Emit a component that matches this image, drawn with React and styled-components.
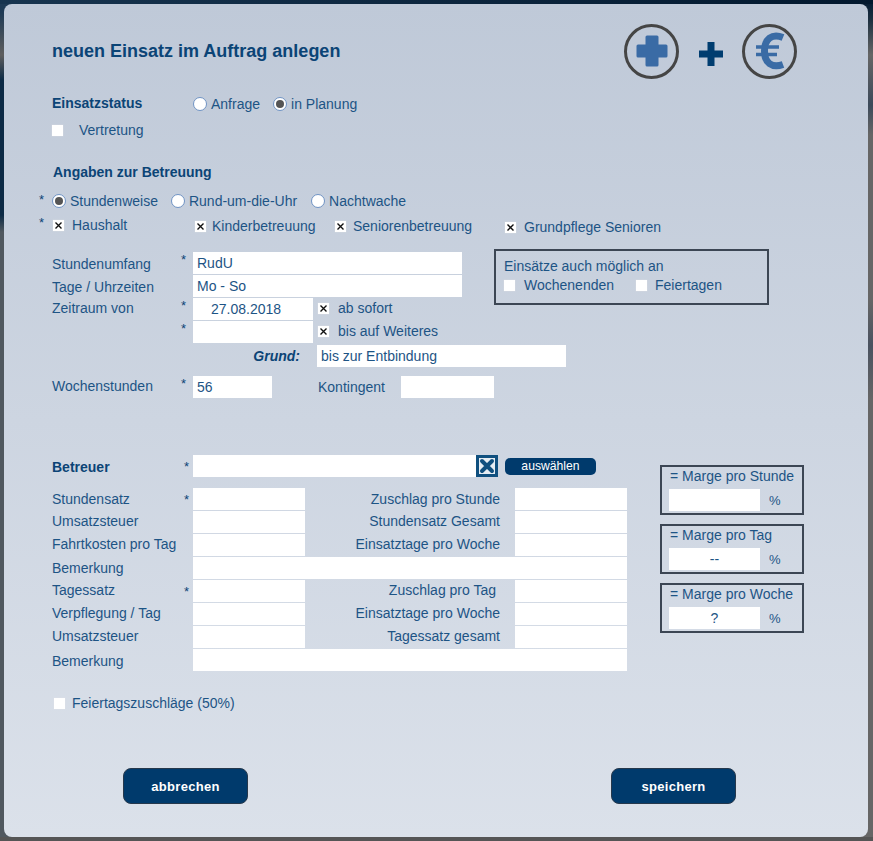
import React from "react";
import styled, { createGlobalStyle } from "styled-components";

const GlobalStyle = createGlobalStyle`
	html, body {
		margin: 0;
		padding: 0;
		height: 100%;
	}
	body {
		font-family: "Liberation Sans", Arial, sans-serif;
		font-size: 14px;
		color: #1d5485;
		background-color: #555;
	}
`;

const Page = styled.div`
	width: 873px;
	height: 841px;
	box-sizing: border-box;
	padding: 4px 5px 4px 4px;
	overflow: hidden;
	background-image:
		linear-gradient(to right, #17344f, #02182e),
		linear-gradient(to right, #555, #555),
		linear-gradient(to bottom, #1e3a55 0, #1e3a55 12px, #5e5e5e 55px, #0c2a45 80px, #0c2a45 215px, #50585f 232px, #50585f 100%),
		linear-gradient(to bottom, #021a33 0, #1d3040 20px, #666 55px, #3c4a5a 105px, #666 135px, #666 300px, #4a5260 345px, #666 400px, #666 100%);
	background-size: 100% 4px, 100% 4px, 50% 100%, 50% 100%;
	background-position: left top, left bottom, left top, right top;
	background-repeat: no-repeat;
`;

const Panel = styled.div`
	box-sizing: border-box;
	width: 864px;
	height: 833px;
	padding-left: 48px;
	border-radius: 8px;
	background: linear-gradient(to bottom, #bfc9d8, #dbe1ea);
`;

const Header = styled.div`
	display: flex;
	justify-content: space-between;
	align-items: center;
	height: 56px;
	padding: 19px 71px 0 0;
`;

const Title = styled.h1`
	margin: 0;
	font-size: 18px;
	font-weight: bold;
	color: #0b4476;
`;

const Icons = styled.div`
	display: flex;
	align-items: center;
	gap: 19px;
`;

const Circle = styled.div`
	display: flex;
	justify-content: center;
	align-items: center;
	box-sizing: border-box;
	width: 55px;
	height: 55px;
	margin-right: ${(p) => p.$right || 0}px;
	border: 3.5px solid #454545;
	border-radius: 50%;
`;

const PlusSign = styled.svg`
	margin-top: 6px;
`;

const Line = styled.div`
	display: flex;
	align-items: center;
	height: 20px;
	margin-top: ${(p) => p.$top || 0}px;
	padding-left: ${(p) => p.$left || 0}px;
`;

const StatusLabel = styled.div`
	width: 141px;
	margin-top: ${(p) => (p.$shift || 0) * 2}px;
	font-size: 14px;
	font-weight: bold;
	color: #0b4476;
`;

const Heading = styled.h2`
	margin: ${(p) => p.$top}px 0 0 1px;
	height: 20px;
	line-height: 20px;
	font-size: 14px;
	font-weight: bold;
	color: #0b4476;
`;

const Option = styled.label`
	display: flex;
	align-items: center;
	gap: ${(p) => p.$gap || 4}px;
	margin-left: ${(p) => p.$left || 0}px;
	margin-right: ${(p) => p.$right || 0}px;
	margin-top: ${(p) => (p.$shift || 0) * 2}px;
	width: ${(p) => (p.$width ? `${p.$width}px` : "auto")};
	white-space: nowrap;
`;

const RadioDot = styled.span`
	display: flex;
	justify-content: center;
	align-items: center;
	box-sizing: border-box;
	width: 14px;
	height: 14px;
	border: 1px solid #6f93c4;
	border-radius: 50%;
	background: #fff;

	&::after {
		content: "";
		display: ${(p) => (p.$on ? "block" : "none")};
		width: 8px;
		height: 8px;
		border-radius: 50%;
		background: #555;
	}
`;

const CheckBox = styled.span`
	display: flex;
	flex: none;
	justify-content: center;
	align-items: center;
	width: 11px;
	height: 11px;
	background: #fff;
	box-shadow: 0 0 1px #e4e4e4;
`;

const Star = styled.span`
	flex: none;
	align-self: flex-start;
	width: ${(p) => p.$width || 13}px;
	padding-top: ${(p) => p.$down || 0}px;
	font-size: 13px;
	line-height: 14px;
	color: #0b4476;
`;

const StarRows = styled.div`
	margin-left: -13px;
`;

const Cross = () => (
	<svg width="9" height="9" viewBox="0 0 9 9">
		<path d="M1.5 1.5 L7.5 7.5 M7.5 1.5 L1.5 7.5" stroke="#111" strokeWidth="1.4" />
	</svg>
);

const Check = ({ on }) => <CheckBox>{on && <Cross />}</CheckBox>;

const Upper = styled.div`
	display: flex;
	align-items: flex-start;
	margin-top: 14px;
`;

const UpperLeft = styled.div`
	display: flex;
	flex-direction: column;
	gap: 1px;
	width: 442px;
	padding-top: 3px;
`;

const FormRow = styled.div`
	display: grid;
	grid-template-columns: 129px 12px auto 1fr;
	align-items: center;
	height: 22px;
`;

const RowLabel = styled.span`
	margin-top: ${(p) => (p.$shift || 0) * 2}px;
	white-space: nowrap;
`;

const Field = styled.input`
	box-sizing: border-box;
	width: ${(p) => p.$width}px;
	height: 22px;
	margin-left: ${(p) => p.$left || 0}px;
	padding: 0 0 0 ${(p) => p.$pad ?? 4}px;
	border: 0;
	outline: 0;
	background: #fff;
	font-family: "Liberation Sans", Arial, sans-serif;
	font-size: 14px;
	color: #1d5485;
	text-align: ${(p) => p.$align || "left"};
`;

const SideBox = styled.div`
	box-sizing: border-box;
	width: 275px;
	height: 56px;
	padding: 7px 0 0 8px;
	border: 2px solid #3c4654;
`;

const SideRow = styled.div`
	display: flex;
	margin-top: 3px;
`;

const GrundRow = styled.div`
	display: flex;
	align-items: center;
	margin-top: 2px;
`;

const GrundLabel = styled.div`
	width: 248px;
	text-align: right;
	font-weight: bold;
	font-style: italic;
	color: #0b4476;
`;

const WochenRow = styled.div`
	display: grid;
	grid-template-columns: 129px 12px 79px 46px 83px auto;
	align-items: center;
	height: 22px;
	margin-top: 9px;
`;

const Lower = styled.div`
	display: flex;
	margin-top: 57px;
`;

const LowerLeft = styled.div`
	width: 575px;
	margin-right: 33px;
`;

const PickRow = styled.div`
	display: grid;
	grid-template-columns: 132px 9px 283px 22px 7px 91px;
	align-items: center;
	height: 22px;
`;

const ClearButton = styled.div`
	display: flex;
	justify-content: center;
	align-items: center;
	box-sizing: border-box;
	width: 22px;
	height: 22px;
	border: 3px solid #10507f;
	background: #e6edf3;
`;

const PickButton = styled.button`
	height: 17px;
	padding: 0;
	border: 0;
	border-radius: 5px;
	background: #003a6c;
	font-family: "Liberation Sans", Arial, sans-serif;
	font-size: 12.2px;
	color: #fff;
`;

const RatesGrid = styled.div`
	display: grid;
	grid-template-columns: 132px 9px 112px 210px 112px;
	grid-auto-rows: 22px;
	row-gap: 1px;
	align-items: center;
	margin-top: 11px;
`;

const Cell = styled.div`
	grid-column: 3 / span 3;
	height: 22px;
	background: #fff;
`;

const ValueCell = styled.div`
	height: 22px;
	background: #fff;
`;

const RightLabel = styled.div`
	margin-top: ${(p) => (p.$shift || 0) * 2}px;
	padding-right: ${(p) => p.$right || 15}px;
	text-align: right;
	white-space: nowrap;
`;

const Margins = styled.div`
	display: flex;
	flex-direction: column;
	gap: 9px;
	margin-top: 10px;
`;

const MarginBox = styled.div`
	box-sizing: border-box;
	width: 144px;
	height: 50px;
	padding: 2px 0 0 7px;
	border: 2px solid #3c4654;
`;

const MarginTitle = styled.div`
	height: 20px;
	padding-left: 1px;
	line-height: 15px;
	white-space: nowrap;
`;

const MarginRow = styled.div`
	display: flex;
	align-items: center;
	gap: 9px;
	font-size: 13px;
`;

const Footer = styled.div`
	display: flex;
	gap: 363px;
	margin-top: 55px;
	padding-left: 71px;
`;

const ActionButton = styled.button`
	width: 125px;
	height: 36px;
	padding: 0;
	border: 1px solid #26384c;
	border-radius: 8px;
	background: #003a6c;
	font-family: "Liberation Sans", Arial, sans-serif;
	font-size: 13px;
	font-weight: bold;
	letter-spacing: 0.3px;
	color: #fff;
`;

const Radio = ({ label, on, gap, right }) => (
	<Option $gap={gap} $right={right}>
		<RadioDot $on={on} />
		{label}
	</Option>
);

const rates = [
	{ label: "Stundensatz", required: true, right: "Zuschlag pro Stunde" },
	{ label: "Umsatzsteuer", shift: -1, right: "Stundensatz Gesamt" },
	{ label: "Fahrtkosten pro Tag", shift: -1, right: "Einsatztage pro Woche" },
	{ label: "Bemerkung" },
	{ label: "Tagessatz", shift: -1, required: true, right: "Zuschlag pro Tag", pad: 19 },
	{ label: "Verpflegung / Tag", shift: -1, right: "Einsatztage pro Woche" },
	{ label: "Umsatzsteuer", shift: -1, right: "Tagessatz gesamt" },
	{ label: "Bemerkung", shift: 1 },
];

const margins = [
	["= Marge pro Stunde", ""],
	["= Marge pro Tag", "--"],
	["= Marge pro Woche", "?"],
];

const App = () => {
	return (
		<Page>
			<GlobalStyle />
			<Panel>
				<Header>
					<Title>neuen Einsatz im Auftrag anlegen</Title>
					<Icons>
						<Circle $right={1}>
							<svg width="32" height="32" viewBox="0 0 32 32">
								<path
									d="M11 0.5 H21 A1.5 1.5 0 0 1 22.5 2 V9.5 H30 A1.5 1.5 0 0 1 31.5 11 V21 A1.5 1.5 0 0 1 30 22.5 H22.5 V30 A1.5 1.5 0 0 1 21 31.5 H11 A1.5 1.5 0 0 1 9.5 30 V22.5 H2 A1.5 1.5 0 0 1 0.5 21 V11 A1.5 1.5 0 0 1 2 9.5 H9.5 V2 A1.5 1.5 0 0 1 11 0.5 Z"
									fill="#3a6ba5"
								/>
							</svg>
						</Circle>
						<PlusSign width="24" height="24" viewBox="0 0 24 24">
							<path d="M8.5 0 H15.5 V8.5 H24 V15.5 H15.5 V24 H8.5 V15.5 H0 V8.5 H8.5 Z" fill="#003d70" />
						</PlusSign>
						<Circle>
							<svg width="30" height="38" viewBox="0 0 30 38">
								<path d="M28 5.5 C17 1 9.5 7 9.5 19 C9.5 31 17 36.5 28 32.5" fill="none" stroke="#3a6ba5" strokeWidth="7" />
								<path d="M1 15 H24 M1 22.5 H22" fill="none" stroke="#3a6ba5" strokeWidth="3.6" />
							</svg>
						</Circle>
					</Icons>
				</Header>

				<Line $top={15}>
					<StatusLabel $shift={-1}>Einsatzstatus</StatusLabel>
					<Radio label="Anfrage" right={13} />
					<Radio label="in Planung" on />
				</Line>
				<Line $top={6}>
					<Option $gap={16}>
						<Check />
						Vertretung
					</Option>
				</Line>

				<Heading $top={22}>Angaben zur Betreuung</Heading>

				<StarRows>
					<Line $top={9}>
						<Star $down={2}>*</Star>
						<Radio label="Stundenweise" on right={13} />
						<Radio label="Rund-um-die-Uhr" right={14} />
						<Radio label="Nachtwache" />
					</Line>
					<Line $top={4}>
						<Star $down={1}>*</Star>
						<Option $gap={8} $width={142} $left={1}>
							<Check on />
							Haushalt
						</Option>
						<Option $gap={6} $width={140} $shift={1}>
							<Check on />
							Kinderbetreuung
						</Option>
						<Option $gap={7} $width={170} $shift={1}>
							<Check on />
							Seniorenbetreuung
						</Option>
						<Option $gap={8} $shift={2}>
							<Check on />
							Grundpflege Senioren
						</Option>
					</Line>
				</StarRows>

				<Upper>
					<UpperLeft>
						<FormRow>
							<RowLabel $shift={1}>Stundenumfang</RowLabel>
							<Star $down={1}>*</Star>
							<Field $width={269} defaultValue="RudU" />
						</FormRow>
						<FormRow>
							<RowLabel $shift={1}>Tage / Uhrzeiten</RowLabel>
							<span />
							<Field $width={269} defaultValue="Mo - So" />
						</FormRow>
						<FormRow>
							<RowLabel $shift={-1}>Zeitraum von</RowLabel>
							<Star $down={1}>*</Star>
							<Field $width={120} $pad={18} defaultValue="27.08.2018" />
							<Option $gap={9} $left={5} $shift={-1}>
								<Check on />
								ab sofort
							</Option>
						</FormRow>
						<FormRow>
							<span />
							<Star $down={1}>*</Star>
							<Field $width={120} />
							<Option $gap={9} $left={5} $shift={-1}>
								<Check on />
								bis auf Weiteres
							</Option>
						</FormRow>
					</UpperLeft>
					<SideBox>
						Einsätze auch möglich an
						<SideRow>
							<Option $gap={9} $width={132}>
								<Check />
								Wochenenden
							</Option>
							<Option $gap={8}>
								<Check />
								Feiertagen
							</Option>
						</SideRow>
					</SideBox>
				</Upper>

				<GrundRow>
					<GrundLabel>Grund:</GrundLabel>
					<Field $width={249} $left={17} defaultValue="bis zur Entbindung" />
				</GrundRow>

				<WochenRow>
					<RowLabel $shift={-1}>Wochenstunden</RowLabel>
					<Star $down={1}>*</Star>
					<Field $width={79} defaultValue="56" />
					<span />
					<span>Kontingent</span>
					<Field $width={93} />
				</WochenRow>

				<Lower>
					<LowerLeft>
						<PickRow>
							<StatusLabel $shift={1}>Betreuer</StatusLabel>
							<Star $width={9} $down={5}>*</Star>
							<Field $width={283} />
							<ClearButton>
								<svg width="16" height="16" viewBox="0 0 16 16">
									<path d="M3 3 L13 13 M13 3 L3 13" stroke="#10507f" strokeWidth="4" strokeLinecap="round" />
								</svg>
							</ClearButton>
							<span />
							<PickButton>auswählen</PickButton>
						</PickRow>
						<RatesGrid>
							{rates.map(({ label, required, right, pad, shift }, index) => (
								<React.Fragment key={index}>
									<RowLabel $shift={shift}>{label}</RowLabel>
									{required ? <Star $width={9} $down={5}>*</Star> : <span />}
									{right ? (
										<>
											<ValueCell />
											<RightLabel $right={pad} $shift={shift}>{right}</RightLabel>
											<ValueCell />
										</>
									) : (
										<Cell />
									)}
								</React.Fragment>
							))}
						</RatesGrid>
						<Line $top={22} $left={2}>
							<Option $gap={7}>
								<Check />
								Feiertagszuschläge (50%)
							</Option>
						</Line>
					</LowerLeft>
					<Margins>
						{margins.map(([title, value]) => (
							<MarginBox key={title}>
								<MarginTitle>{title}</MarginTitle>
								<MarginRow>
									<Field $width={91} $pad={0} $align="center" defaultValue={value} />
									%
								</MarginRow>
							</MarginBox>
						))}
					</Margins>
				</Lower>

				<Footer>
					<ActionButton>abbrechen</ActionButton>
					<ActionButton>speichern</ActionButton>
				</Footer>
			</Panel>
		</Page>
	);
};

export default App;
